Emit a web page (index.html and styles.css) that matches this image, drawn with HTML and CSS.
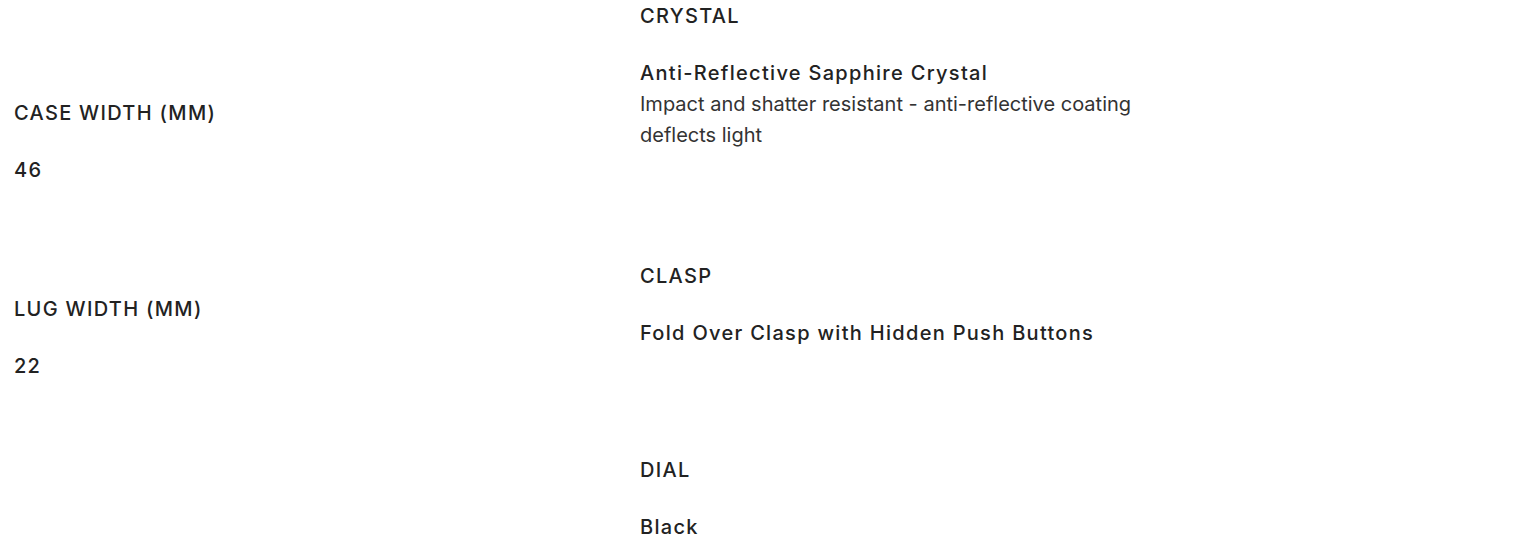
FILE: index.html
```html
<!DOCTYPE html>
<html lang="en">
<head>
<meta charset="utf-8">
<link rel="stylesheet" href="styles.css">
<title>Specs</title>
</head>
<body>
<div class="specs">
  <div class="col col-left">
    <div class="spec">
      <div class="label">CASE WIDTH (MM)</div>
      <div class="value">46</div>
    </div>
    <div class="spec">
      <div class="label">LUG WIDTH (MM)</div>
      <div class="value">22</div>
    </div>
  </div>
  <div class="col col-right">
    <div class="spec">
      <div class="label">CRYSTAL</div>
      <div class="value">Anti-Reflective Sapphire Crystal</div>
      <div class="desc">Impact and shatter resistant - anti-reflective coating<br>deflects light</div>
    </div>
    <div class="spec">
      <div class="label">CLASP</div>
      <div class="value">Fold Over Clasp with Hidden Push Buttons</div>
    </div>
    <div class="spec">
      <div class="label">DIAL</div>
      <div class="value">Black</div>
    </div>
  </div>
</div>
</body>
</html>
```

FILE: styles.css
```css
html, body {
  margin: 0;
  padding: 0;
  background: #fff;
}
body {
  font-family: Inter, "Noto Sans", sans-serif;
  color: #222;
  font-size: 20px;
}
.specs {
  display: grid;
  grid-template-columns: 626px 1fr;
  padding-left: 14px;
}
.col {
  display: flex;
  flex-direction: column;
  gap: 113px;
}
.col-left {
  padding-top: 101px;
  gap: 115px;
}
.col-right {
  padding-top: 4px;
}
.spec {
  display: flex;
  flex-direction: column;
}
.label {
  font-weight: 500;
  line-height: 24px;
  letter-spacing: 0.065em;
}
.value {
  font-weight: 500;
  line-height: 24px;
  letter-spacing: 0.065em;
  margin-top: 33px;
}
.desc {
  font-weight: 400;
  line-height: 31px;
  margin-top: 4px;
  color: #333;
}
```
